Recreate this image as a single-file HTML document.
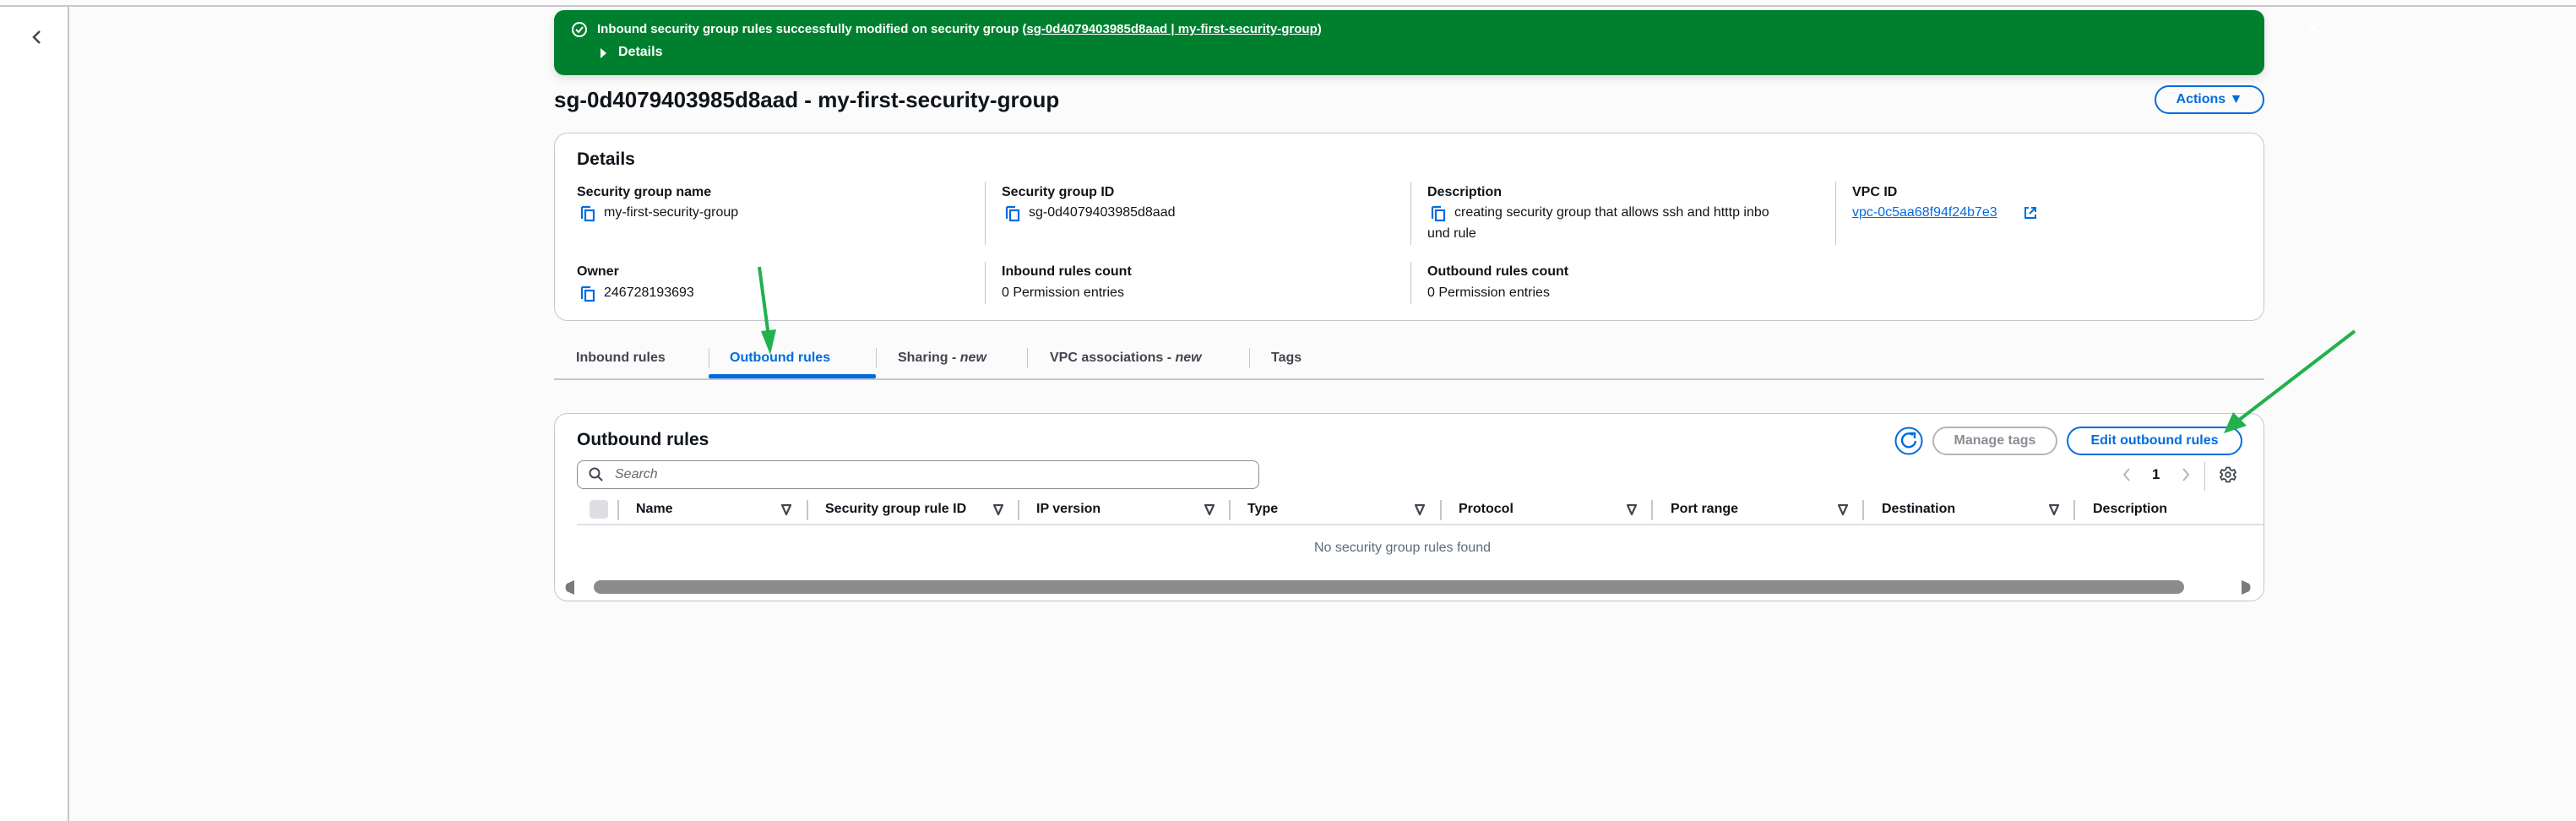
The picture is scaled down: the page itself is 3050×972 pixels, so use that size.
<!DOCTYPE html>
<html><head><meta charset="utf-8"><style>
*{box-sizing:border-box;margin:0;padding:0}
body{width:3050px;height:972px;background:#fbfbfb;font-family:"Liberation Sans",sans-serif;color:#0f141a;position:relative;overflow:hidden}
.a{position:absolute;white-space:nowrap}
.lab{font-weight:bold;font-size:16px}
.val{font-size:16px}
.div{position:absolute;width:1px;background:#c6c6cd}
.th{position:absolute;top:594px;font-weight:bold;font-size:16px;color:#0f141a}
.tri{position:absolute;top:597px}
.cd{position:absolute;top:592px;width:2px;height:24px;background:#c6c6cd}
.cp{position:absolute;width:18px;height:20px}
</style></head><body>
<div class="a" style="left:0;top:6px;width:3050px;height:2px;background:#c6c6cd"></div>
<div class="a" style="left:0;top:8px;width:80px;height:964px;background:#fff"></div>
<div class="a" style="left:80px;top:6px;width:2px;height:966px;background:#c6c6cd"></div>
<svg class="a" style="left:34px;top:34px" width="20" height="20"><path d="M13 3 L6 10 L13 17" stroke="#424650" stroke-width="2.5" fill="none"/></svg>

<div class="a" style="left:656px;top:12px;width:2025px;height:77px;background:#00802f;border-radius:12px;box-shadow:0 4px 10px rgba(0,0,0,.12)"></div>
<svg class="a" style="left:676px;top:25px" width="20" height="20"><circle cx="10" cy="10" r="8" stroke="#fff" stroke-width="2" fill="none"/><path d="M6 10 L9 13 L14 7" stroke="#fff" stroke-width="2" fill="none"/></svg>
<div class="a" style="left:707px;top:26px;color:#fff;font-weight:bold;font-size:15px">Inbound security group rules successfully modified on security group (<u>sg-0d4079403985d8aad | my-first-security-group</u>)</div>
<svg class="a" style="left:710px;top:56px" width="10" height="14"><path d="M1 1 L8 7 L1 13Z" fill="#fff"/></svg>
<div class="a" style="left:732px;top:53px;color:#fff;font-weight:bold;font-size:16px">Details</div>
<svg class="a" style="left:2729px;top:24px" width="20" height="20"><path d="M3 3 L17 17 M17 3 L3 17" stroke="#fff" stroke-width="2.2"/></svg>

<div class="a" style="left:656px;top:103px;font-weight:bold;font-size:26px">sg-0d4079403985d8aad - my-first-security-group</div>
<div class="a" style="left:2551px;top:101px;width:130px;height:34px;border:2px solid #006ce0;border-radius:17px;color:#006ce0;font-weight:bold;font-size:16px;text-align:center;line-height:30px">Actions &#9660;</div>

<div class="a" style="left:656px;top:157px;width:2025px;height:223px;background:#fff;border:1px solid #c6c6cd;border-radius:16px"></div>
<div class="a" style="left:683px;top:177px;font-weight:bold;font-size:21px">Details</div>
<div class="div" style="left:1166px;top:215px;height:75px"></div>
<div class="div" style="left:1670px;top:215px;height:75px"></div>
<div class="div" style="left:2173px;top:215px;height:75px"></div>
<div class="div" style="left:1166px;top:310px;height:50px"></div>
<div class="div" style="left:1670px;top:310px;height:50px"></div>

<div class="a lab" style="left:683px;top:219px">Security group name</div>
<svg class="cp" style="left:687px;top:243px"><path d="M2 2 H12 M2 2 V16" stroke="#006ce0" stroke-width="2.2" fill="none"/><rect x="6" y="6" width="10" height="12" stroke="#006ce0" stroke-width="2.2" fill="none"/></svg>
<div class="a val" style="left:715px;top:243px">my-first-security-group</div>
<div class="a lab" style="left:1186px;top:219px">Security group ID</div>
<svg class="cp" style="left:1190px;top:243px"><path d="M2 2 H12 M2 2 V16" stroke="#006ce0" stroke-width="2.2" fill="none"/><rect x="6" y="6" width="10" height="12" stroke="#006ce0" stroke-width="2.2" fill="none"/></svg>
<div class="a val" style="left:1218px;top:243px">sg-0d4079403985d8aad</div>
<div class="a lab" style="left:1690px;top:219px">Description</div>
<svg class="cp" style="left:1694px;top:243px"><path d="M2 2 H12 M2 2 V16" stroke="#006ce0" stroke-width="2.2" fill="none"/><rect x="6" y="6" width="10" height="12" stroke="#006ce0" stroke-width="2.2" fill="none"/></svg>
<div class="a val" style="left:1722px;top:243px">creating security group that allows ssh and htttp inbo</div>
<div class="a val" style="left:1690px;top:268px">und rule</div>
<div class="a lab" style="left:2193px;top:219px">VPC ID</div>
<div class="a val" style="left:2193px;top:243px;color:#006ce0;text-decoration:underline">vpc-0c5aa68f94f24b7e3</div>
<svg class="a" style="left:2396px;top:244px" width="16" height="16"><path d="M6 2 H2 V14 H14 V10 M9 2 H14 V7 M14 2 L7 9" stroke="#006ce0" stroke-width="2" fill="none"/></svg>

<div class="a lab" style="left:683px;top:313px">Owner</div>
<svg class="cp" style="left:687px;top:338px"><path d="M2 2 H12 M2 2 V16" stroke="#006ce0" stroke-width="2.2" fill="none"/><rect x="6" y="6" width="10" height="12" stroke="#006ce0" stroke-width="2.2" fill="none"/></svg>
<div class="a val" style="left:715px;top:338px">246728193693</div>
<div class="a lab" style="left:1186px;top:313px">Inbound rules count</div>
<div class="a val" style="left:1186px;top:338px">0 Permission entries</div>
<div class="a lab" style="left:1690px;top:313px">Outbound rules count</div>
<div class="a val" style="left:1690px;top:338px">0 Permission entries</div>

<div class="a" style="left:656px;top:448px;width:2025px;height:2px;background:#c6c6cd"></div>
<div class="a" style="left:682px;top:415px;font-weight:bold;font-size:16px;color:#424650">Inbound rules</div>
<div class="div" style="left:839px;top:412px;height:24px"></div>
<div class="a" style="left:864px;top:415px;font-weight:bold;font-size:16px;color:#006ce0">Outbound rules</div>
<div class="a" style="left:839px;top:443px;width:198px;height:5px;background:#006ce0;border-radius:2px"></div>
<div class="div" style="left:1037px;top:412px;height:24px"></div>
<div class="a" style="left:1063px;top:415px;font-weight:bold;font-size:16px;color:#424650">Sharing - <i>new</i></div>
<div class="div" style="left:1216px;top:412px;height:24px"></div>
<div class="a" style="left:1243px;top:415px;font-weight:bold;font-size:16px;color:#424650">VPC associations - <i>new</i></div>
<div class="div" style="left:1479px;top:412px;height:24px"></div>
<div class="a" style="left:1505px;top:415px;font-weight:bold;font-size:16px;color:#424650">Tags</div>

<div class="a" style="left:656px;top:489px;width:2025px;height:223px;background:#fff;border:1px solid #c6c6cd;border-radius:16px"></div>
<div class="a" style="left:683px;top:509px;font-weight:bold;font-size:21px">Outbound rules</div>
<div class="a" style="left:683px;top:545px;width:808px;height:34px;border:1px solid #8c8c94;border-radius:8px"></div>
<svg class="a" style="left:697px;top:553px" width="18" height="18"><circle cx="7" cy="7" r="5.5" stroke="#424650" stroke-width="2" fill="none"/><path d="M11 11 L16 16" stroke="#424650" stroke-width="2"/></svg>
<div class="a" style="left:728px;top:553px;font-style:italic;font-size:16px;color:#656871">Search</div>

<svg class="a" style="left:2243px;top:505px" width="34" height="34"><circle cx="17" cy="17" r="15.5" stroke="#006ce0" stroke-width="2" fill="#fff"/><path d="M22 10 A8 8 0 1 0 25 17" stroke="#006ce0" stroke-width="2.4" fill="none"/><path d="M18 8 L24 8 L24 14" stroke="#006ce0" stroke-width="2.4" fill="none"/></svg>
<div class="a" style="left:2288px;top:505px;width:148px;height:34px;border:2px solid #b4b4bb;border-radius:17px;color:#8c8c94;font-weight:bold;font-size:16px;text-align:center;line-height:30px">Manage tags</div>
<div class="a" style="left:2447px;top:505px;width:208px;height:34px;border:2px solid #006ce0;border-radius:17px;color:#006ce0;font-weight:bold;font-size:16px;text-align:center;line-height:30px">Edit outbound rules</div>

<svg class="a" style="left:2512px;top:553px" width="12" height="18"><path d="M9 2 L3 9 L9 16" stroke="#b4b4bb" stroke-width="2" fill="none"/></svg>
<div class="a" style="left:2548px;top:552px;font-weight:bold;font-size:17px">1</div>
<svg class="a" style="left:2582px;top:553px" width="12" height="18"><path d="M3 2 L9 9 L3 16" stroke="#b4b4bb" stroke-width="2" fill="none"/></svg>
<div class="div" style="left:2610px;top:547px;height:34px"></div>
<svg class="a" style="left:2628px;top:552px" width="20" height="20"><path d="M8 1.5 H12 L12.6 4 L15 5.2 L17.3 4 L19 7.4 L17 9 V11 L19 12.6 L17.3 16 L15 14.8 L12.6 16 L12 18.5 H8 L7.4 16 L5 14.8 L2.7 16 L1 12.6 L3 11 V9 L1 7.4 L2.7 4 L5 5.2 L7.4 4Z" stroke="#424650" stroke-width="1.8" fill="none" stroke-linejoin="round"/><circle cx="10" cy="10" r="2.8" stroke="#424650" stroke-width="1.8" fill="none"/></svg>

<div class="a" style="left:698px;top:592px;width:22px;height:22px;background:#dedee3;border-radius:4px"></div>
<div class="cd" style="left:731px"></div>
<div class="th" style="left:753px">Name</div>
<div class="cd" style="left:955px"></div>
<div class="th" style="left:977px">Security group rule ID</div>
<div class="cd" style="left:1205px"></div>
<div class="th" style="left:1227px">IP version</div>
<div class="cd" style="left:1455px"></div>
<div class="th" style="left:1477px">Type</div>
<div class="cd" style="left:1705px"></div>
<div class="th" style="left:1727px">Protocol</div>
<div class="cd" style="left:1955px"></div>
<div class="th" style="left:1978px">Port range</div>
<div class="cd" style="left:2205px"></div>
<div class="th" style="left:2228px">Destination</div>
<div class="cd" style="left:2455px"></div>
<div class="th" style="left:2478px">Description</div>
<svg class="a" style="left:0;top:0" width="3050" height="972">
<g stroke="#424650" stroke-width="2.2" fill="none" stroke-linejoin="round">
<path d="M926 598 H936 L931 609Z"/><path d="M1177 598 H1187 L1182 609Z"/><path d="M1427 598 H1437 L1432 609Z"/><path d="M1676 598 H1686 L1681 609Z"/><path d="M1927 598 H1937 L1932 609Z"/><path d="M2177 598 H2187 L2182 609Z"/><path d="M2427 598 H2437 L2432 609Z"/>
</g></svg>
<div class="a" style="left:683px;top:620px;width:1997px;height:2px;background:#e0e0e5"></div>
<div class="a" style="left:1556px;top:640px;font-size:16px;color:#5f6b7a">No security group rules found</div>

<svg class="a" style="left:668px;top:687px" width="14" height="17"><path d="M12 0 V17 L3 13 Q0 8.5 3 4Z" fill="#7a7a7a"/></svg>
<div class="a" style="left:703px;top:687px;width:1883px;height:16px;background:#8c8c8c;border-radius:8px"></div>
<svg class="a" style="left:2652px;top:687px" width="14" height="17"><path d="M2 0 V17 L11 13 Q14 8.5 11 4Z" fill="#7a7a7a"/></svg>

<svg class="a" style="left:0;top:0" width="3050" height="972">
<line x1="899" y1="316" x2="910" y2="398" stroke="#22b14c" stroke-width="4"/>
<path d="M901 392 L912 420 L919 390Z" fill="#22b14c"/>
<line x1="2788" y1="392" x2="2650" y2="498" stroke="#22b14c" stroke-width="4"/>
<path d="M2644 488 L2633 513 L2660 504Z" fill="#22b14c"/>
</svg>
</body></html>
